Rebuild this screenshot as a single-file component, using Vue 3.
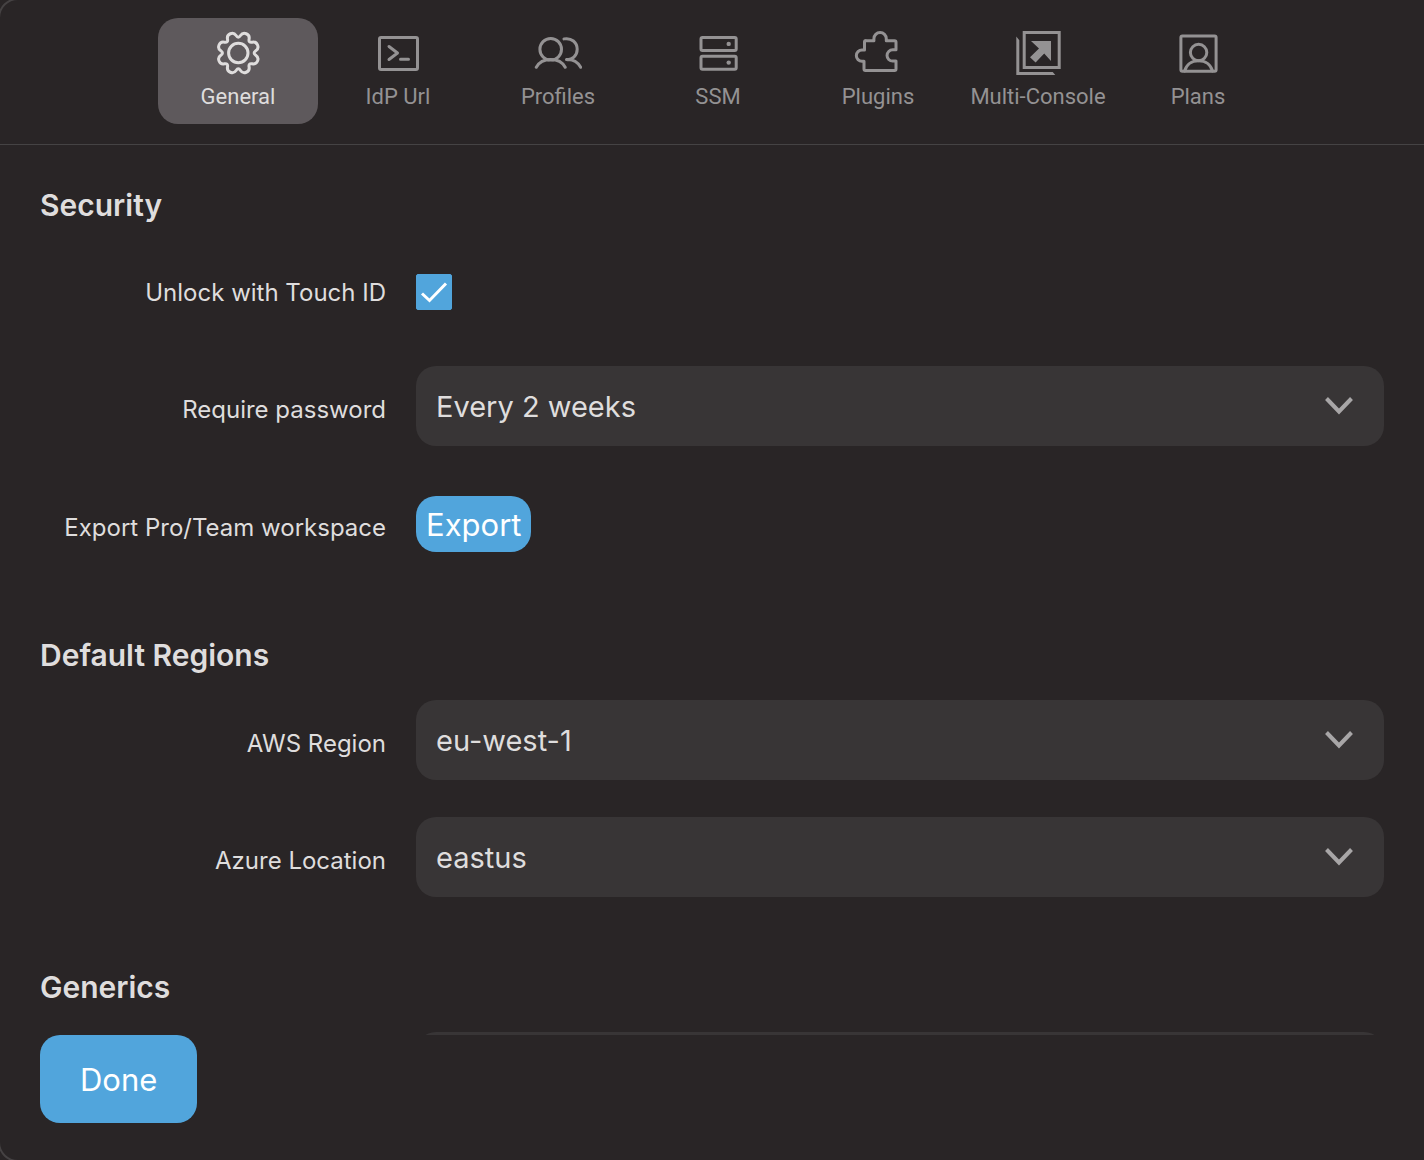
<script setup>
import { ref } from 'vue'

const tabs = ['General', 'IdP Url', 'Profiles', 'SSM', 'Plugins', 'Multi-Console', 'Plans']
const activeTab = ref('General')
const touchId = ref(true)
const requirePassword = ref('Every 2 weeks')
const awsRegion = ref('eu-west-1')
const azureLocation = ref('eastus')

// Eight rounded teeth, drawn as quadratic curves through the midpoints of the corners.
const corners = []
for (let tooth = 0; tooth < 8; tooth++) {
  for (const [angle, radius] of [[0, 14.2], [12, 21.2], [33, 21.2]]) {
    const a = ((tooth * 45 + angle - 90) * Math.PI) / 180
    corners.push([24.3 + radius * Math.cos(a), 24 + radius * Math.sin(a)])
  }
}
const mid = (p, q) => `${((p[0] + q[0]) / 2).toFixed(2)} ${((p[1] + q[1]) / 2).toFixed(2)}`
const gearPath =
  `M${mid(corners[corners.length - 1], corners[0])}` +
  corners
    .map((c, i) => `Q${c[0].toFixed(2)} ${c[1].toFixed(2)} ${mid(c, corners[(i + 1) % corners.length])}`)
    .join('') +
  'Z'
</script>

<template>
  <div class="window">
    <nav class="tabs">
      <button
        v-for="tab in tabs"
        :key="tab"
        type="button"
        class="tab"
        :class="{ active: tab === activeTab }"
        @click="activeTab = tab"
      >
        <svg class="icon" viewBox="0 0 48 48" aria-hidden="true">
          <g v-if="tab === 'General'">
            <path :d="gearPath" />
            <circle cx="24.3" cy="24" r="9.7" />
          </g>
          <g v-else-if="tab === 'IdP Url'">
            <rect x="5.5" y="8.5" width="38" height="32" rx="1.5" />
            <path d="M15 17.5l8.5 6.5-8.5 6.5M26.5 30.2h8" />
          </g>
          <g v-else-if="tab === 'Profiles'">
            <circle cx="16.7" cy="20.3" r="10.8" />
            <path d="M2.3 38.3C5 33.5 10.5 30.6 16.7 30.6S28.6 33.5 31.2 38.3M30 9.9C37.5 8.5 43.2 13.5 43.2 20.3S38 31 32.5 30.6C39 30 44 33.5 46.7 38.3" />
          </g>
          <g v-else-if="tab === 'SSM'">
            <rect x="7" y="8.5" width="35.2" height="13" rx="1.5" />
            <rect x="7" y="27.3" width="35.2" height="13" rx="1.5" />
            <circle class="solid" cx="34.7" cy="14.9" r="2.2" />
            <circle class="solid" cx="34.7" cy="33.6" r="2.2" />
          </g>
          <g v-else-if="tab === 'Plugins'">
            <path d="M12 11.700h7.900V9.800a6.200 6.200 0 0 1 12.400 0v1.900h8.200q1.500 0 1.500 1.500v7.600h-3.300a5.500 5.500 0 0 0 0 11.300H42v7.900q0 1.500-1.500 1.500h-29q-1.500 0-1.500-1.500v-7.700H8a5.600 5.600 0 0 1 0-11.300h2.500v-7.900q0-1.500 1.500-1.500z" />
          </g>
          <g v-else-if="tab === 'Multi-Console'">
            <path class="square" d="M10.200 3.500h35v35h-35z" />
            <path class="solid" d="M2.300 7.600L5.300 11.300V43h33.400l2.600 3H2.300zM17 12h20v20l-6.800-7.400-8.600 8.800-5.600-5.200 9-8.800z" />
          </g>
          <g v-else>
            <rect x="6.900" y="7" width="35.200" height="35.200" rx="1.500" />
            <circle cx="24.600" cy="23.500" r="8.200" />
            <path d="M10.600 42C12.300 35.500 17.800 31.700 24.600 31.700S36.800 35.500 38.500 42" />
          </g>
        </svg>
        <span>{{ tab }}</span>
      </button>
    </nav>

    <main class="content">
      <section>
        <h2 class="security-title">Security</h2>
        <div class="row check-row">
          <label for="touch-id">Unlock with Touch ID</label>
          <span class="check">
            <input id="touch-id" v-model="touchId" type="checkbox" />
            <svg v-if="touchId" viewBox="0 0 36 36" aria-hidden="true"><path d="M6 19.500l7.500 7L30 9.500" /></svg>
          </span>
        </div>
        <div class="row">
          <label for="password">Require password</label>
          <span class="select">
            <select id="password" v-model="requirePassword">
              <option>Every 2 weeks</option>
            </select>
            <svg viewBox="0 0 28 18" aria-hidden="true"><path d="M1.500 1.500L14 14.500 26.500 1.500" /></svg>
          </span>
        </div>
        <div class="row export-row">
          <label for="export">Export Pro/Team workspace</label>
          <button id="export" type="button" class="primary export">Export</button>
        </div>
      </section>

      <section>
        <h2>Default Regions</h2>
        <div class="row">
          <label for="aws">AWS Region</label>
          <span class="select">
            <select id="aws" v-model="awsRegion">
              <option>eu-west-1</option>
            </select>
            <svg viewBox="0 0 28 18" aria-hidden="true"><path d="M1.500 1.500L14 14.500 26.500 1.500" /></svg>
          </span>
        </div>
        <div class="row">
          <label for="azure">Azure Location</label>
          <span class="select">
            <select id="azure" v-model="azureLocation">
              <option>eastus</option>
            </select>
            <svg viewBox="0 0 28 18" aria-hidden="true"><path d="M1.500 1.500L14 14.500 26.500 1.500" /></svg>
          </span>
        </div>
      </section>

      <section>
        <h2>Generics</h2>
        <div class="row">
          <span></span>
          <span class="select"><select aria-label="Generics"></select></span>
        </div>
      </section>
    </main>

    <footer>
      <button type="button" class="primary done">Done</button>
    </footer>
  </div>
</template>

<style>
body {
  background: #292526;
}
</style>

<style scoped>
.window {
  position: relative;
  display: flex;
  flex-direction: column;
  height: 100vh;
  box-sizing: border-box;
  overflow: hidden;
  background: #292526;
  color: #dfdddd;
  font-family: Inter, "Liberation Sans", sans-serif;
}
.window::after {
  content: "";
  position: absolute;
  inset: -2px -24px -2px -2px;
  border: 2px solid #454243;
  border-radius: 20px;
  pointer-events: none;
}
button,
select {
  font-family: inherit;
  border: 0;
  margin: 0;
}
.tabs {
  display: flex;
  flex: none;
  justify-content: center;
  padding: 18px 0 20px 12px;
  border-bottom: 1px solid #454344;
}
.tab {
  display: flex;
  flex-direction: column;
  align-items: center;
  width: 160px;
  height: 106px;
  padding: 11px 0 0;
  border-radius: 20px;
  background: none;
  color: #949293;
  font-family: Roboto, "Liberation Sans", sans-serif;
  font-size: 22px;
  font-weight: 400;
  line-height: 40px;
  white-space: nowrap;
}
.tab.active {
  background: #5e595c;
  color: #dfdddd;
}
.icon {
  width: 48px;
  height: 48px;
  fill: none;
  stroke: currentColor;
  stroke-width: 3;
  stroke-linecap: round;
  stroke-linejoin: round;
}
.solid {
  fill: currentColor;
  stroke: none;
}
.square {
  stroke-linejoin: miter;
}
.content {
  flex: 1;
  min-height: 0;
  padding: 40px 40px 0;
  overflow-y: auto;
  scrollbar-width: none;
}
section {
  display: flex;
  flex-direction: column;
  gap: 37px;
  margin-bottom: 70px;
}
h2 {
  margin: 0 0 -12px;
  font-size: 30px;
  font-weight: 600;
  line-height: 40px;
}
.security-title {
  margin-bottom: -7px;
}
.row {
  display: grid;
  grid-template-columns: 346px 1fr;
  column-gap: 30px;
  align-items: center;
  min-height: 80px;
}
.check-row {
  min-height: 74px;
}
.export-row {
  min-height: 82px;
}
label {
  padding-top: 8px;
  text-align: right;
  font-size: 24px;
  line-height: 32px;
}
.check-row label {
  padding-top: 2px;
}
.check {
  position: relative;
  width: 36px;
  height: 36px;
}
.check input {
  appearance: none;
  display: block;
  width: 36px;
  height: 36px;
  margin: 0;
  border: 1px solid #8a8889;
  border-radius: 2px;
}
.check input:checked {
  border-color: #51a5dc;
  background: #51a5dc;
}
.check svg {
  position: absolute;
  inset: 0;
  fill: none;
  stroke: #fff;
  stroke-width: 3;
  pointer-events: none;
}
.select {
  position: relative;
  display: block;
}
.select select {
  appearance: none;
  display: block;
  width: 100%;
  height: 80px;
  padding: 0 80px 0 20px;
  border-radius: 20px;
  background: #383536;
  color: #dfdddd;
  font-size: 29px;
  font-weight: 400;
}
.select svg {
  position: absolute;
  top: 31px;
  right: 31px;
  width: 28px;
  height: 18px;
  fill: none;
  stroke: #a8a6a7;
  stroke-width: 4;
  pointer-events: none;
}
.primary {
  border-radius: 20px;
  background: #51a5dc;
  color: #fff;
  font-size: 31px;
  line-height: 40px;
}
.export {
  justify-self: start;
  padding: 9px 10px 7px;
}
.done {
  padding: 25px 40px 23px;
}
footer {
  flex: none;
  padding: 0 40px 37px;
}
</style>
